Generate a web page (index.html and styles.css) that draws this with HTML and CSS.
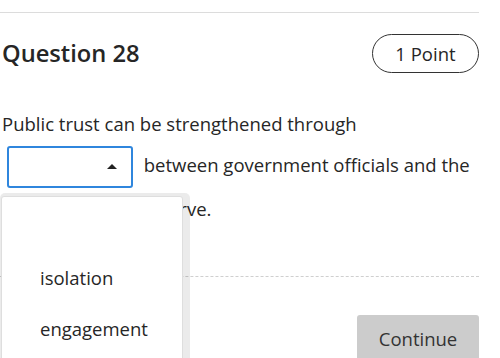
FILE: index.html
```html
<!DOCTYPE html>
<html>
<head>
<meta charset="utf-8">
<link rel="stylesheet" href="styles.css">
</head>
<body>
<div class="page">
  <div class="rule"></div>
  <div class="header">
    <h1 class="title">Question 28</h1>
    <span class="points">1 Point</span>
  </div>
  <p class="question">Public trust can be strengthened through<br><span class="select"><span class="caret"></span></span> between government officials and the<br>public whom they serve.</p>
  <div class="dashed"></div>
  <div class="actions">
    <button class="continue">Continue</button>
  </div>
  <div class="menu">
    <div class="menu-inner">
      <div class="option">isolation</div>
      <div class="option">engagement</div>
    </div>
  </div>
</div>
</body>
</html>
```
FILE: styles.css
```css
html, body {
  margin: 0;
  padding: 0;
  background: #fff;
}
body {
  font-family: "Open Sans", "Noto Sans", sans-serif;
  color: #262626;
  overflow: hidden;
}
.page {
  position: relative;
  box-sizing: border-box;
  width: 479px;
  height: 358px;
  padding-top: 12px;
  overflow: hidden;
}
.rule {
  height: 1px;
  background: #dcdcdc;
}
.header {
  display: flex;
  justify-content: space-between;
  align-items: center;
  margin-top: 21px;
  padding-left: 2px;
}
.title {
  margin: 0;
  font-size: 23.7px;
  font-weight: 600;
  line-height: 39px;
}
.points {
  box-sizing: border-box;
  height: 39px;
  width: 107px;
  border: 1px solid #333;
  border-radius: 20px;
  display: flex;
  align-items: center;
  justify-content: center;
  font-size: 18.5px;
  font-weight: 400;
}
.question {
  margin: 30px 0 0;
  padding-left: 2px;
  font-size: 18.5px;
  line-height: 41px;
}
.select {
  display: inline-block;
  box-sizing: border-box;
  width: 126px;
  height: 42px;
  margin-left: 5px;
  margin-right: 6px;
  border: 2px solid #2f86dd;
  border-radius: 3px;
  vertical-align: middle;
  position: relative;
}
.caret {
  position: absolute;
  right: 14px;
  top: 16px;
  width: 0;
  height: 0;
  border-left: 5px solid transparent;
  border-right: 5px solid transparent;
  border-bottom: 5px solid #222;
}
.dashed {
  margin-top: 47px;
  border-top: 1px dashed #cfcfcf;
}
.actions {
  display: flex;
  justify-content: flex-end;
  margin-top: 38px;
}
.continue {
  width: 122px;
  height: 48px;
  border: none;
  border-radius: 3px;
  background: #cccccc;
  color: #333;
  font-family: "Open Sans", sans-serif;
  font-size: 18.5px;
  padding: 0 0 2px;
}
.menu {
  position: absolute;
  left: 0;
  top: 193px;
  width: 190px;
  height: 180px;
  box-sizing: border-box;
  background: rgba(0, 0, 0, 0.08);
  border-radius: 5px;
  padding: 3px 7px 0 1px;
}
.menu-inner {
  background: #fff;
  border: 1px solid #dedede;
  border-radius: 3px;
  height: 100%;
  padding-top: 68px;
  box-sizing: border-box;
}
.option {
  padding-left: 38px;
  font-size: 18.5px;
  line-height: 26px;
  height: 51px;
}
```
